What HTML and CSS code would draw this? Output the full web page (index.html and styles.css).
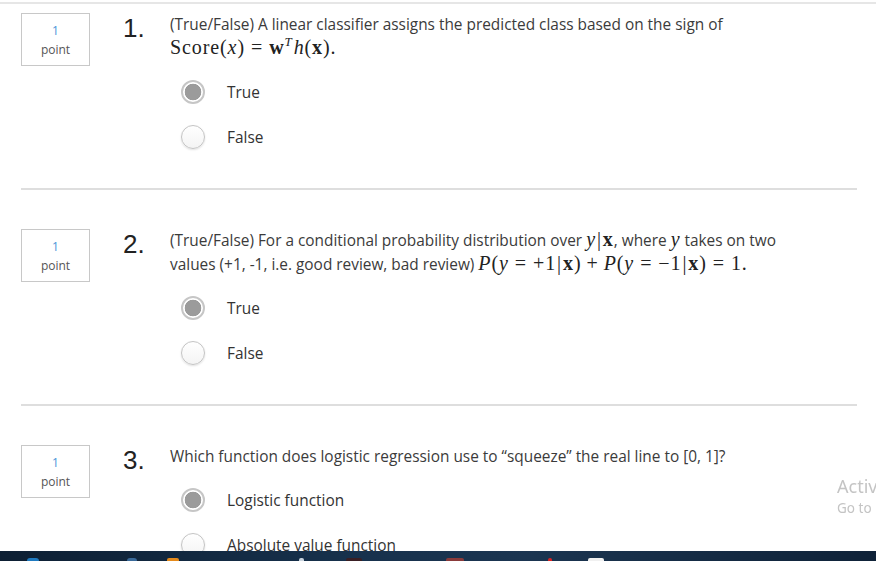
FILE: index.html
```html
<!DOCTYPE html>
<html>
<head>
<meta charset="utf-8">
<link rel="stylesheet" href="styles.css">
</head>
<body>
<div class="topline"></div>
<main class="page">
  <section class="q first">
    <div class="points"><span class="pn">1</span><span class="pl">point</span></div>
    <div class="num">1.</div>
    <div class="qbody">
      <p class="text">(True/False) A linear classifier assigns the predicted class based on the sign of<br><span class="math">Score(<i>x</i>)<span class="rel">=</span><b>w</b><sup><i>T</i></sup><i>h</i>(<b>x</b>).</span></p>
      <ul class="opts">
        <li class="opt"><span class="radio on"></span><span>True</span></li>
        <li class="opt"><span class="radio"></span><span>False</span></li>
      </ul>
    </div>
  </section>
  <hr class="sep">
  <section class="q">
    <div class="points"><span class="pn">1</span><span class="pl">point</span></div>
    <div class="num">2.</div>
    <div class="qbody">
      <p class="text">(True/False) For a conditional probability distribution over <span class="math"><i>y</i><span class="bar">|</span><b>x</b></span>, where <span class="math"><i>y</i></span> takes on two<br>values (+1, -1, i.e. good review, bad review) <span class="math"><i>P</i>(<i>y</i><span class="rel">=</span>+1<span class="bar">|</span><b>x</b>)<span class="bin">+</span><i>P</i>(<i>y</i><span class="rel">=</span>−1<span class="bar">|</span><b>x</b>)<span class="rel">=</span>1.</span></p>
      <ul class="opts">
        <li class="opt"><span class="radio on"></span><span>True</span></li>
        <li class="opt"><span class="radio"></span><span>False</span></li>
      </ul>
    </div>
  </section>
  <hr class="sep">
  <section class="q">
    <div class="points"><span class="pn">1</span><span class="pl">point</span></div>
    <div class="num">3.</div>
    <div class="qbody">
      <p class="text">Which function does logistic regression use to “squeeze” the real line to [0, 1]?</p>
      <ul class="opts">
        <li class="opt"><span class="radio on"></span><span>Logistic function</span></li>
        <li class="opt"><span class="radio"></span><span>Absolute value function</span></li>
      </ul>
    </div>
  </section>
</main>
<div class="watermark">
  <div class="wm1">Activ</div>
  <div class="wm2">Go to</div>
</div>
<footer class="taskbar">
  <span class="tb-icon c1"></span>
  <span class="tb-icon c2"></span>
  <span class="tb-icon c3"></span>
  <span class="tb-icon c4"></span>
  <span class="tb-icon c5"></span>
  <span class="tb-icon c6"></span>
  <span class="tb-icon c7"></span>
  <span class="tb-icon c8"></span>
</footer>
</body>
</html>
```

FILE: styles.css
```css
html, body {
  margin: 0;
  padding: 0;
  height: 561px;
  overflow: hidden;
  background: #fff;
}
body {
  font-family: "Open Sans", "Noto Sans", sans-serif;
  color: #333;
}
.topline {
  margin-top: 2px;
  height: 2px;
  background: #e6e6e6;
}
.page {
  padding: 0 19px 0 21px;
}
.q {
  display: flex;
  align-items: flex-start;
  padding: 39px 0 39px 0;
}
.q.first {
  padding-top: 9px;
}
.points {
  width: 67px;
  height: 51px;
  border: 1px solid #c8c8c8;
  display: flex;
  flex-direction: column;
  align-items: center;
  justify-content: center;
  font-size: 12px;
  line-height: 19px;
  flex: none;
}
.pn {
  color: #4b95d8;
}
.pl {
  color: #555;
}
.num {
  width: 47px;
  margin-left: 33px;
  font-family: "Liberation Sans", Arial, sans-serif;
  font-size: 26px;
  line-height: 30px;
  color: #222;
  flex: none;
}
.qbody {
  flex: 1;
}
.text {
  margin: 0;
  font-size: 15.4px;
  line-height: 24px;
  color: #3b3b3b;
  white-space: nowrap;
}
.math {
  font-family: "Liberation Serif", "Times New Roman", serif;
  font-size: 20px;
  line-height: 1;
  letter-spacing: 0.9px;
  color: #222;
}
.math sup {
  font-size: 13px;
  line-height: 0;
  margin-right: 1px;
}
.rel {
  margin: 0 6px;
}
.bin {
  margin: 0 5px;
}
.bar {
  display: inline-block;
  margin: 0 1px;
}
.opts {
  list-style: none;
  margin: 19px 0 0 0;
  padding: 0;
  display: flex;
  flex-direction: column;
  gap: 21px;
}
.opt {
  display: flex;
  align-items: center;
  height: 24px;
  font-size: 15.4px;
  color: #333;
}
.radio {
  box-sizing: border-box;
  width: 24px;
  height: 24px;
  border-radius: 50%;
  margin-left: 11px;
  margin-right: 22px;
  border: 1px solid #c4c4c4;
  background: linear-gradient(#fff, #f4f4f4);
  box-shadow: 0 1px 2px rgba(0,0,0,0.12);
  flex: none;
}
.radio.on {
  border: 2px solid #c6c6c6;
  background: radial-gradient(circle, #9b9b9b 0, #9b9b9b 8px, #fff 8.6px);
  box-shadow: none;
}
.sep {
  margin: 0;
  border: 0;
  height: 2px;
  background: #dedede;
}
.watermark {
  position: fixed;
  left: 837px;
  top: 474px;
  color: #c4c4c4;
  font-family: "Noto Sans", "Open Sans", sans-serif;
  white-space: nowrap;
}
.wm1 {
  font-size: 18px;
  line-height: 24px;
}
.wm2 {
  font-size: 13.5px;
  line-height: 20px;
}
.taskbar {
  position: fixed;
  left: 0;
  right: 0;
  bottom: 0;
  height: 10px;
  background: linear-gradient(90deg, #0d1f33 0%, #17314c 40%, #1b3551 60%, #0f2238 100%);
  display: flex;
  align-items: flex-end;
  overflow: hidden;
}
.tb-icon {
  height: 3px;
  border-radius: 2px 2px 0 0;
  flex: none;
}
.c1 { width: 12px; margin-left: 27px; background: #1f7ac0; border-radius: 6px 6px 0 0; }
.c2 { width: 10px; margin-left: 88px; background: #3a6a9a; border-radius: 5px 5px 0 0; }
.c3 { width: 12px; margin-left: 30px; background: #e58a1b; }
.c4 { width: 5px; margin-left: 120px; background: #c9d3dd; }
.c5 { width: 16px; margin-left: 42px; background: #3a1f24; }
.c6 { width: 18px; margin-left: 84px; background: #8a3a3a; }
.c7 { width: 4px; margin-left: 84px; background: #d22; }
.c8 { width: 16px; margin-left: 36px; background: #f0f0f0; }
```
